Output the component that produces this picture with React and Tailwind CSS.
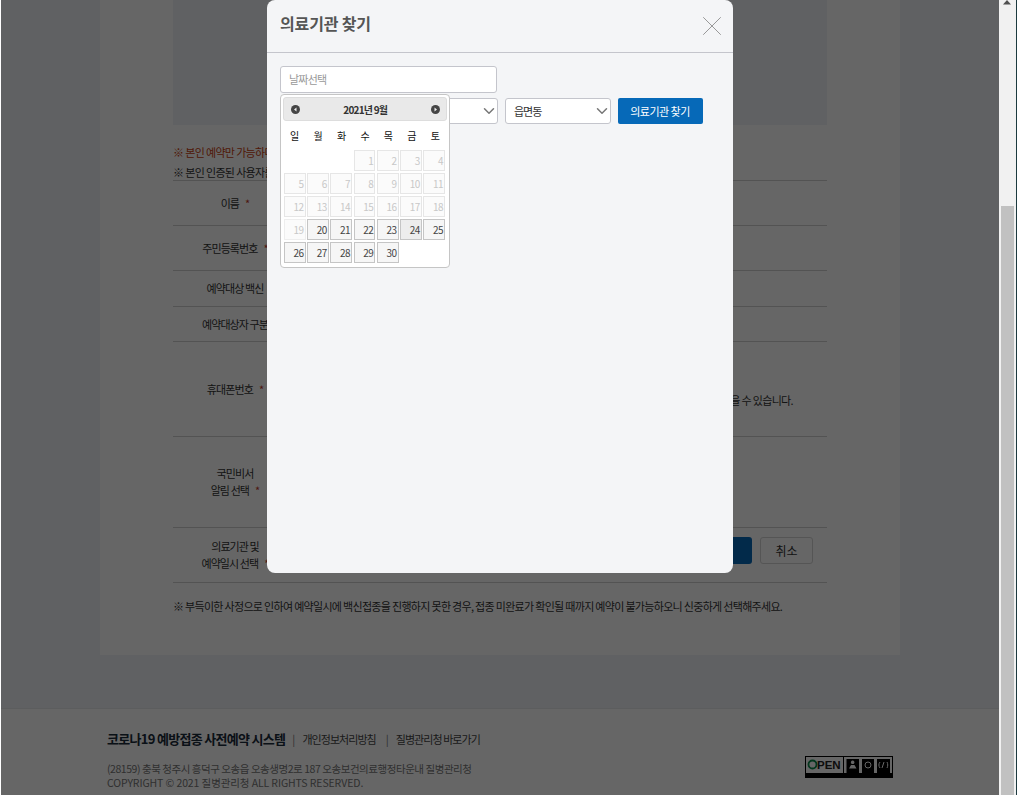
import React from 'react';
import { ChevronDown, X } from 'lucide-react';

const FONT = 'font-["Noto_Sans_CJK_KR","Noto_Sans",sans-serif]';

const weekdays = ['일', '월', '화', '수', '목', '금', '토'];

// 달력 칸: null은 빈칸
const days = [null, null, null, 1, 2, 3, 4];
for (let d = 5; d <= 30; d++) days.push(d);

const Label = ({ lines, star = true }) => (
  <div className="flex w-[124px] shrink-0 flex-col items-center justify-center text-[11px] leading-[17px] tracking-[-0.9px] text-[#333]">
    {lines.map((line, i) => (
      <span key={line} className="whitespace-nowrap">
        {line}
        {star && i === lines.length - 1 && <span className="ml-[6px] text-[#c0392b]">*</span>}
      </span>
    ))}
  </div>
);

const Row = ({ className, lines, star, children }) => (
  <div className={`flex border-b border-[#cfcfcf] ${className}`}>
    <Label lines={lines} star={star} />
    <div className="flex min-w-0 flex-1 items-center justify-end">{children}</div>
  </div>
);

const Select = ({ label }) => (
  <div className="flex h-[26px] w-[105.5px] items-center justify-between rounded-[3px] border border-[#c4c5cc] bg-white pl-[8px] text-[11px] tracking-[-1px] text-[#333]">
    <span>{label}</span>
    <ChevronDown size={18} strokeWidth={2} className="mr-[-1px] text-[#777]" />
  </div>
);

const NavIcon = ({ next }) => (
  <svg width="9" height="9" viewBox="0 0 9 9">
    <circle cx="4.5" cy="4.5" r="4.5" fill="#454545" />
    <path d={next ? 'M3.5 2.5 6 4.5 3.5 6.5Z' : 'M5.5 2.5 3 4.5 5.5 6.5Z'} fill="#eee" />
  </svg>
);

const Calendar = () => (
  <div className="absolute left-[13px] top-[94px] h-[173.5px] w-[170px] rounded-[4px] border border-[#c5c5c5] bg-white p-[2px]">
    <div className="flex h-[24px] items-center justify-between rounded-[3px] border border-[#ddd] bg-[#e9e9e9] pl-[6.5px] pr-[6px]">
      <NavIcon />
      <span className="text-[10px] font-bold tracking-[-0.8px] text-[#333]">2021년 9월</span>
      <NavIcon next />
    </div>
    <div className="mt-[0px] grid h-[28px] w-[164px] grid-cols-7 items-center text-center text-[10px] text-[#111]">
      {weekdays.map((w) => (
        <span key={w}>{w}</span>
      ))}
    </div>
    <div className="ml-[1px] mt-[1px] grid w-[161px] grid-cols-7 gap-x-[1.7px] gap-y-[2px]">
      {days.map((d, i) => {
        if (d === null) return <span key={`blank-${i}`} className="h-[21px]" />;
        const enabled = d >= 20;
        const today = d === 24;
        return (
          <span
            key={d}
            className={`h-[21px] border pr-[1px] text-right text-[10px] leading-[19px] tracking-[-0.5px] ${
              enabled
                ? `border-[#c5c5c5] text-[#454545] ${today ? 'bg-[#ededed]' : 'bg-[#f6f6f6]'}`
                : `bg-[#fbfbfb] text-[#c8c8c8] ${d === 19 ? 'border-[#eeeeee]' : 'border-[#e6e6e6]'}`
            }`}
          >
            {d}
          </span>
        );
      })}
    </div>
  </div>
);

const Modal = () => (
  <div className="absolute left-[267px] top-0 h-[573px] w-[466px] rounded-[8px] bg-[#f4f5f7]">
    <div className="flex h-[53px] items-center justify-between border-b border-[#c4c5cc] pl-[13px] pr-[4.5px]">
      <h2 className="mb-[7px] text-[16px] font-bold tracking-[-0.15px] text-[#555]">의료기관 찾기</h2>
      <X size={34} strokeWidth={0.6} className="text-[#888]" />
    </div>
    <div className="px-[13px] pt-[13px]">
      <div className="flex h-[26.5px] w-[217px] items-center rounded-[3px] border border-[#c4c5cc] bg-white pl-[8px] text-[11px] tracking-[-0.8px] text-[#999]">
        날짜선택
      </div>
      <div className="mt-[5.5px] flex gap-[7px]">
        <Select label="충청북도" />
        <Select label="청주시" />
        <Select label="읍면동" />
        <button className="h-[26px] w-[85px] rounded-[2px] bg-[#0669b8] text-[11px] tracking-[-0.5px] text-white">의료기관 찾기</button>
      </div>
    </div>
    <Calendar />
  </div>
);

const OpenLogo = () => (
  <svg width="88" height="22" viewBox="0 0 88 22" className="mt-[18px] shrink-0">
    <rect x="0.5" y="0.5" width="87" height="21" fill="#fff" stroke="#000" />
    <rect y="17" width="88" height="5" fill="#000" />
    <circle cx="7.5" cy="8.5" r="4" fill="none" stroke="#0a8a4a" strokeWidth="1.8" />
    <text x="12" y="13" fontSize="11.5" fontWeight="700" fontFamily="Liberation Sans, sans-serif" fill="#222">PEN</text>
    <rect x="38" y="0" width="1" height="17" fill="#000" />
    <rect x="41.5" y="3" width="12.5" height="14" fill="#000" />
    <rect x="57" y="3" width="12" height="14" fill="#000" />
    <rect x="72" y="3" width="13" height="14" fill="#000" />
    <path d="M47.7 4.5a1.8 1.8 0 1 1-.1 0ZM44 12.5l2-3.5h3.5l2 3.5Z" fill="#fff" />
    <circle cx="63" cy="9" r="3" fill="none" stroke="#fff" />
    <path d="M75 6c-1.5 2-1.5 4 0 6M79 6l-2 6M82 6c1 2 1 4 0 6" fill="none" stroke="#fff" />
  </svg>
);

export default function App() {
  return (
    <div className={`relative flex h-[795px] w-[1017px] overflow-hidden ${FONT}`}>
      {/* 페이지 본문 */}
      <div className="relative h-full w-[999px] shrink-0 border-l border-white bg-[#f1f3f7]">
        <div className="ml-[99px] h-[655px] w-[800px] bg-white px-[73px]">
          <div className="h-[125px] bg-[#f1f3f7]" />
          <p className="mt-[17px] text-[11px] leading-[20px] tracking-[-0.65px] text-[#c8400f]">※ 본인 예약만 가능하며</p>
          <p className="text-[11px] leading-[20px] tracking-[-0.65px] text-[#333]">※ 본인 인증된 사용자를</p>
          <div className="mt-[-2px] border-t border-[#cfcfcf]">
            <Row className="h-[45px]" lines={['이름']} />
            <Row className="h-[45px]" lines={['주민등록번호']} />
            <Row className="h-[36px]" lines={['예약대상 백신']} star={false} />
            <Row className="h-[35px]" lines={['예약대상자 구분']} star={false} />
            <Row className="h-[95px]" lines={['휴대폰번호']}>
              <p className="mr-[34px] mt-[23px] whitespace-nowrap text-[11px] tracking-[-0.65px] text-[#333]">
                예약 관련 안내를 문자로 받을 수 있습니다.
              </p>
            </Row>
            <Row className="h-[91px]" lines={['국민비서', '알림 선택']} />
            <Row className="h-[55px]" lines={['의료기관 및', '예약일시 선택']}>
              <div className="mb-[9px] mr-[14px] flex gap-[8px]">
                <button className="h-[27px] w-[90px] rounded-[3px] bg-[#0669b8]" />
                <button className="h-[27px] w-[53px] rounded-[3px] border border-[#d5d5d5] text-[12px] text-[#333]">취소</button>
              </div>
            </Row>
          </div>
          <p className="mt-[14px] whitespace-nowrap text-[11px] leading-[18px] tracking-[-0.69px] text-[#333]">
            ※ 부득이한 사정으로 인하여 예약일시에 백신접종을 진행하지 못한 경우, 접종 미완료가 확인될 때까지 예약이 불가능하오니 신중하게 선택해주세요.
          </p>
        </div>

        {/* 푸터 */}
        <footer className="mt-[53px] flex h-[87px] justify-between border-t border-[#e6e8ec] bg-white pl-[106px] pr-[106px]">
          <div>
            <div className="mt-[21px] flex items-center text-[11px] leading-[18px] tracking-[-0.95px] text-[#444]">
              <strong className="text-[13px] font-bold tracking-[-0.7px] text-[#1b2b3a]">코로나19 예방접종 사전예약 시스템</strong>
              <span className="ml-[7px] mr-[8px] text-[#777]">|</span>
              <span>개인정보처리방침</span>
              <span className="ml-[10px] mr-[8px] text-[#777]">|</span>
              <span>질병관리청 바로가기</span>
            </div>
            <p className="mt-[14px] whitespace-nowrap text-[10.5px] leading-[14px] tracking-[-0.45px] text-[#777]">
              (28159) 충북 청주시 흥덕구 오송읍 오송생명2로 187 오송보건의료행정타운내 질병관리청
            </p>
            <p className="whitespace-nowrap text-[10.5px] leading-[14px] tracking-[-0.1px] text-[#777]">
              COPYRIGHT © 2021 질병관리청 ALL RIGHTS RESERVED.
            </p>
          </div>
          <div className="pt-[29px]">
            <OpenLogo />
          </div>
        </footer>

        {/* 모달 배경 */}
        <div className="absolute inset-0 bg-black/60" />
      </div>

      {/* 스크롤바 */}
      <div className="flex w-[18px] shrink-0 flex-col border-r border-[#1c3a3f] bg-[#f1f1f1]">
        <svg width="17" height="5" viewBox="0 0 17 5" className="shrink-0">
          <path d="M8 0 12 4.5H4Z" fill="#505050" />
        </svg>
        <div className="ml-[2px] mt-[201px] w-[13px] flex-1 bg-[#c1c1c1]" />
      </div>

      <Modal />
    </div>
  );
}
